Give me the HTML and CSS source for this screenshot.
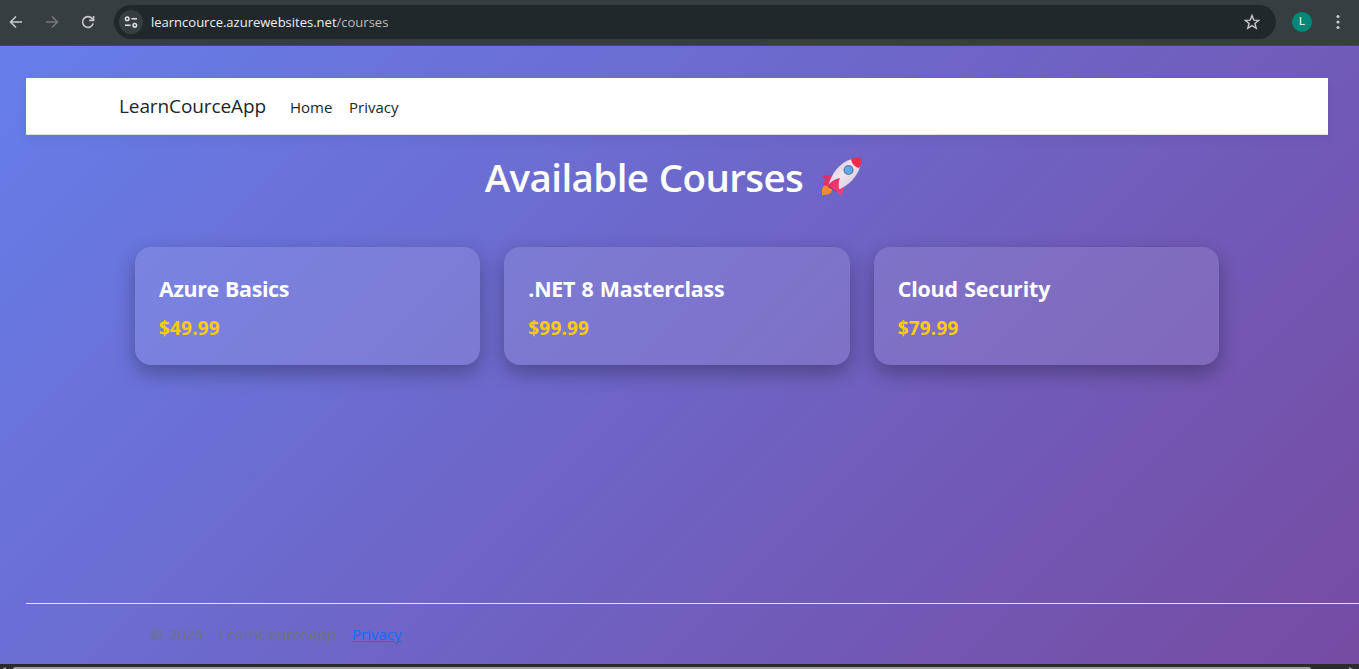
FILE: index.html
```html
<!DOCTYPE html>
<html lang="en">
<head>
<meta charset="utf-8">
<title>Courses - LearnCourceApp</title>
<link rel="stylesheet" href="styles.css">
</head>
<body>
<div class="toolbar">
  <svg class="tool back" viewBox="0 0 16 16"><path d="M14 8H3M8 2.5 2.5 8 8 13.5"/></svg>
  <svg class="tool forward" viewBox="0 0 16 16"><path d="M2 8h11M8 2.5 13.5 8 8 13.5"/></svg>
  <svg class="tool reload" viewBox="0 0 16 16"><path d="M13.2 9.4A5.4 5.4 0 1 1 12.2 4.6L13.4 6M13.6 2v4.400H9.200"/></svg>
  <div class="address">
    <span class="site-info"><svg viewBox="0 0 16 16"><circle cx="4.2" cy="4.7" r="1.8"/><path d="M8.5 4.7H14M2 11.3h5.500"/><circle cx="11.8" cy="11.3" r="1.8"/></svg></span>
    <span class="url"><span class="host">learncource.azurewebsites.net</span>/courses</span>
    <svg class="star" viewBox="0 0 16 16"><path d="m8 1.500 1.800 4.600 4.900.3-3.800 3.100 1.300 4.800L8 11.600l-4.200 2.700 1.300-4.800L1.300 6.400l4.900-.3z"/></svg>
  </div>
  <span class="avatar">L</span>
  <svg class="dots" viewBox="0 0 4 16"><circle cx="2" cy="2.500" r="1.600"/><circle cx="2" cy="8" r="1.600"/><circle cx="2" cy="13.500" r="1.600"/></svg>
</div>
<div class="page">
  <header class="navbar">
    <a class="brand">LearnCourceApp</a>
    <a class="nav-link nav-home">Home</a>
    <a class="nav-link">Privacy</a>
  </header>
  <main>
    <h1><span class="title">Available Courses</span>
      <svg class="rocket" viewBox="0 0 42 40">
        <defs>
          <linearGradient id="hull" x1="0" y1="0" x2="1" y2="1"><stop offset="0" stop-color="#c9bdd3"/><stop offset=".45" stop-color="#eee5f0"/><stop offset="1" stop-color="#cfc2d4"/></linearGradient>
          <linearGradient id="fin" x1="0" y1="0" x2="1" y2="1"><stop offset="0" stop-color="#d52d62"/><stop offset="1" stop-color="#ff4378"/></linearGradient>
        </defs>
        <path d="M3 30c3-3 7-3 9 0 1 3-1 6-3 7-2 .8-3 .2-4 1H2c0-3-.5-6 1-8z" fill="#f98b32"/>
        <path d="M14 18 4.500 18.600C2 18.700 2.500 20.500 5 21.500L3.500 28 10 30l8 5 3.500 3.500C23.500 34 24 30 22 25z" fill="url(#fin)"/>
        <path d="M8.500 28.500C11 17 20 5 32 2l8 8C37 20 29 28 18 33z" fill="url(#hull)"/>
        <path d="M9 28.500 18.500 33l-1.500 2-9-5z" fill="#4a3a72"/>
        <path d="M31 2.500c4-2.500 9-2.500 10-.5 1 3 0 6-2 9-4-1-7-4-8-8.500z" fill="#f02a48"/>
        <path d="M20 21c-6 1-11 5-12 8l10 6.500 3 2.500c1.500-4 1-6-2-6 0-4-1-6 1-11z" fill="url(#fin)"/>
        <circle cx="28.500" cy="13" r="5.100" fill="#7b7890"/><circle cx="28.500" cy="13" r="3.700" fill="#55adf8"/>
      </svg>
    </h1>
    <div class="courses">
      <article class="card"><h2 class="azure">Azure Basics</h2><p>$49.99</p></article>
      <article class="card"><h2 class="dotnet">.NET 8 Masterclass</h2><p>$99.99</p></article>
      <article class="card"><h2 class="cloud">Cloud Security</h2><p>$79.99</p></article>
    </div>
  </main>
  <footer><span class="copyright">© 2025 - LearnCourceApp - </span><a>Privacy</a></footer>
</div>
<div class="scrollbar"><svg class="arrow" viewBox="0 0 4 2"><path d="M4 0v2H0z"/></svg><div class="thumb"></div><svg class="arrow" viewBox="0 0 4 2"><path d="M0 0v2h4z"/></svg></div>
</body>
</html>
```

FILE: styles.css
```css
* { box-sizing: border-box; }
body { margin: 0; height: 669px; overflow: hidden; display: flex; flex-direction: column; font-family: "Open Sans", "Noto Sans", sans-serif; font-size: 16px; }
h1, h2, p { margin: 0; white-space: nowrap; }
svg { display: block; flex: none; }

.toolbar { height: 46px; flex: none; display: flex; align-items: center; padding: 0 18px 2px 8px; background: #373e40; border-bottom: 1px solid #474a4d; }
.tool { width: 16px; height: 16px; fill: none; stroke: #c5c9ca; stroke-width: 1.6; }
.forward { margin-left: 20px; stroke: #74797b; }
.reload { margin-left: 20px; }
.address { width: 1162px; height: 34px; margin-left: 18px; padding: 0 16px 0 5px; border-radius: 17px; background: #20282b; display: flex; align-items: center; }
.site-info { width: 24px; height: 24px; border-radius: 50%; background: #373e40; display: grid; place-items: center; }
.site-info svg { width: 16px; height: 16px; fill: none; stroke: #dfe2e3; stroke-width: 1.5; }
.url { flex: 1; margin-left: 8px; font-size: 13px; color: #b9bdbf; white-space: nowrap; }
.host { color: #eef0f0; }
.star { width: 16px; height: 16px; fill: none; stroke: #c5c9ca; stroke-width: 1.4; }
.avatar { width: 20px; height: 20px; margin-left: 16px; border-radius: 50%; background: #00897b; color: #fff; font: 11px/20px Roboto, sans-serif; text-align: center; }
.dots { width: 4px; height: 16px; margin-left: auto; margin-right: 1px; fill: #c5c9ca; }

.page { height: 618px; flex: none; padding: 32px 0 0 26px; background: linear-gradient(135deg, #667eea, #764ba2); display: flex; flex-direction: column; }
.navbar { width: 1302px; height: 57px; flex: none; padding-left: 93px; background: #fff; border-bottom: 1px solid #dee2e6; box-shadow: 0 4px 12px rgba(0,0,0,.05); display: flex; align-items: center; color: #212529; white-space: nowrap; }
.brand { width: 171px; font-size: 19px; letter-spacing: -.1px; }
.nav-link { padding-top: 1px; font-size: 15px; }
.nav-home { width: 59px; }
main { width: 1302px; flex: 1; padding: 18px 109px 0; }
h1 { height: 48px; display: flex; justify-content: center; align-items: center; padding-right: 7px; color: #fff; font-size: 38.5px; font-weight: 600; line-height: 48px; }
.title { letter-spacing: -.6px; word-spacing: 1px; }
.rocket { width: 42px; height: 40px; margin-left: 17px; }
.courses { margin-top: 46px; display: grid; grid-template-columns: repeat(3, 1fr); gap: 24px; }
.card { height: 118px; padding: 25px 24px 23px; border-radius: 16px; background: rgba(255,255,255,.11); box-shadow: 0 8px 20px rgba(0,0,0,.3); }
.card h2 { color: #fff; font-size: 21.4px; line-height: 34px; font-weight: 700; word-spacing: 1px; }
.azure { letter-spacing: -.35px; }
.dotnet { letter-spacing: -.24px; }
.cloud { letter-spacing: -.16px; }
.card p { margin-top: 7px; color: #ffcc00; font-size: 19px; line-height: 30px; font-weight: 700; letter-spacing: .18px; }
footer { height: 61px; flex: none; padding-left: 125px; border-top: 1px solid #dee2e6; font-size: 15px; line-height: 61px; color: #6c757d; white-space: pre; }
.copyright { word-spacing: 1.6px; }
footer a { color: #0d6efd; text-decoration: underline; }
.scrollbar { height: 5px; padding: 3px 6px 0 2px; background: #2b2b2b; display: flex; }
.arrow { width: 4px; height: 2px; fill: #9f9f9f; }
.thumb { flex: 1; height: 2px; margin: 0 38px 0 7px; border-radius: 2px 2px 0 0; background: #9f9f9f; }
```
